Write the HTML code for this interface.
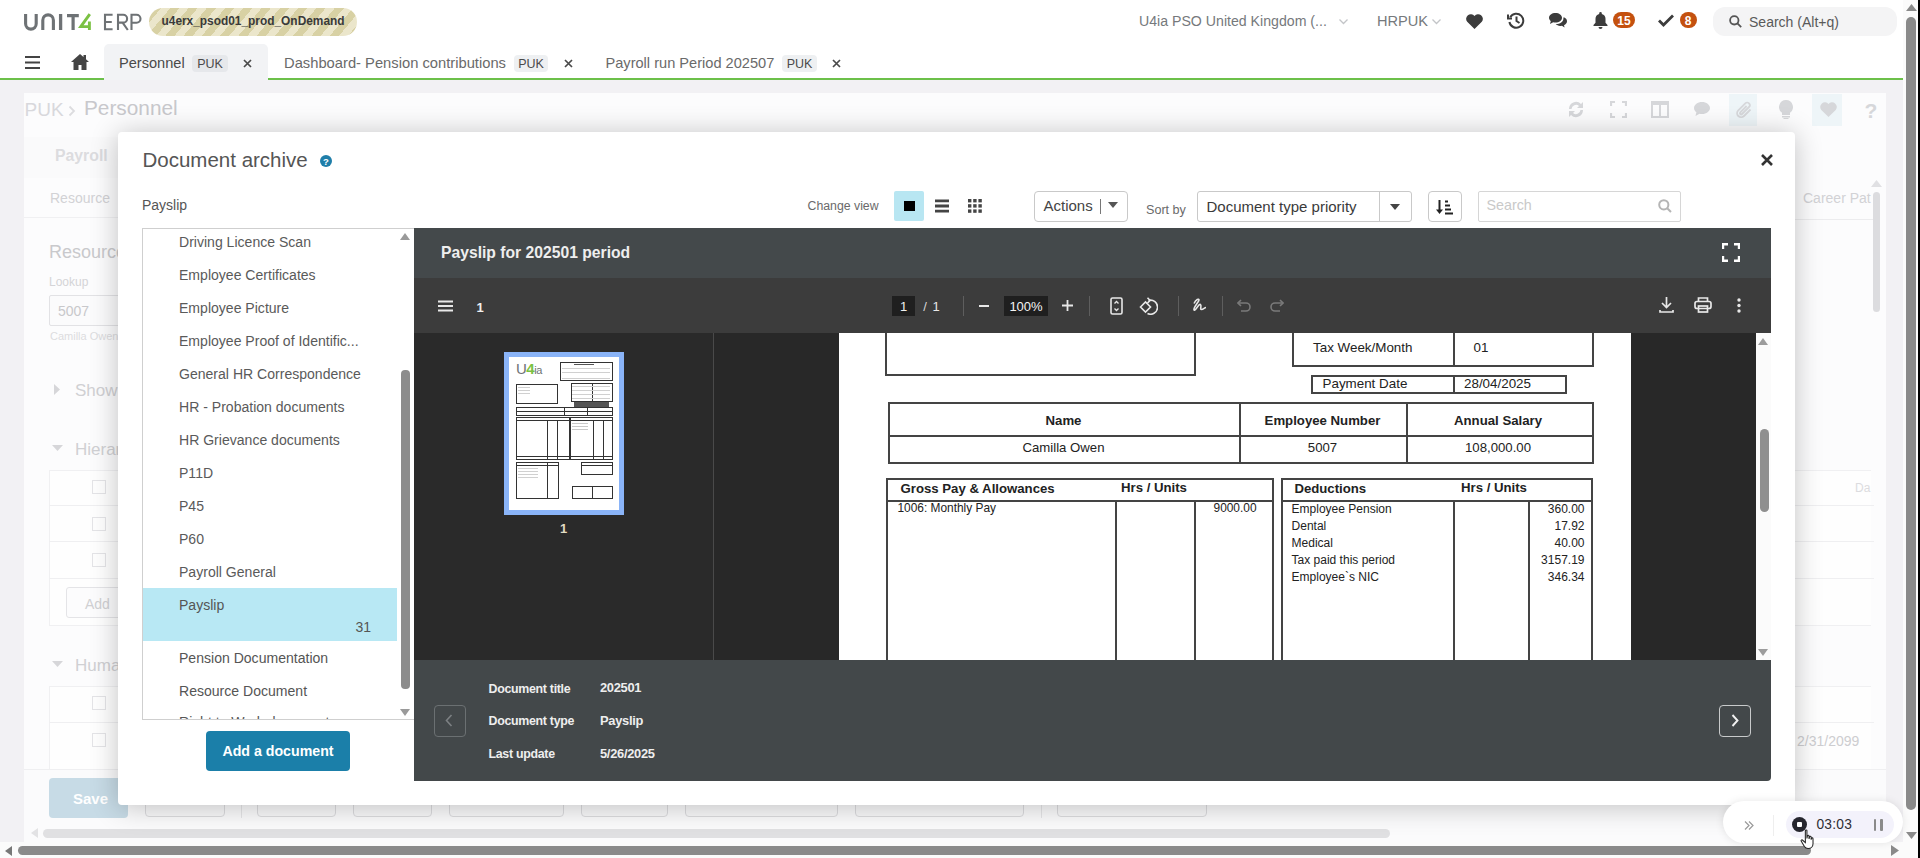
<!DOCTYPE html>
<html><head><meta charset="utf-8">
<style>
*{box-sizing:border-box;margin:0;padding:0}
html,body{width:1920px;height:858px;overflow:hidden;background:#fff;font-family:"Liberation Sans",sans-serif;color:#333;position:relative}
.a{position:absolute}
.t{position:absolute;white-space:nowrap;line-height:1}
</style></head><body>
<div class="a" style="left:0px;top:80px;width:1903px;height:764px;background:#f2f1f4"></div>
<div class="a" style="left:24px;top:93px;width:1862px;height:751px;background:#fcfcfd"></div>
<div class="t" style="left:24.5px;top:99.9px;font-size:19px;color:#d8d8dc;">PUK</div>
<svg class="a" style="left:68px;top:105px" width="8" height="12"><path d="M1.5 1.5l4.5 4.5-4.5 4.5" fill="none" stroke="#dcdcdf" stroke-width="1.8"/></svg>
<div class="t" style="left:84.0px;top:98.4px;font-size:20.8px;color:#c8c8cc;">Personnel</div>
<div class="a" style="left:1729px;top:94px;width:28px;height:32px;background:#eef5f8"></div>
<div class="a" style="left:1812px;top:94px;width:30px;height:32px;background:#eef5f8"></div>
<svg class="a" style="left:1566px;top:100px" width="20" height="19" viewBox="0 0 20 19"><path d="M3 9a7 7 0 0 1 12-5l2-2v6h-6l2-2a4.5 4.5 0 0 0-7.5 3z M17 10a7 7 0 0 1-12 5l-2 2v-6h6l-2 2a4.5 4.5 0 0 0 7.5-3z" fill="#d6d7da"/></svg>
<svg class="a" style="left:1610px;top:101px" width="17" height="17" viewBox="0 0 17 17" fill="none" stroke="#d6d7da" stroke-width="2.2"><path d="M1 5V1h4M12 1h4v4M16 12v4h-4M5 16H1v-4"/></svg>
<svg class="a" style="left:1651px;top:101px" width="18" height="17" viewBox="0 0 18 17"><path d="M0 0h18v17H0z M2 4v11h6V4z M10 4v11h6V4z" fill="#d6d7da" fill-rule="evenodd"/></svg>
<svg class="a" style="left:1694px;top:102px" width="16" height="15" viewBox="0 0 16 15"><path d="M8 0C3.6 0 0 2.7 0 6c0 1.7.9 3.2 2.4 4.3L1.5 14l4-2.3c.8.2 1.6.3 2.5.3 4.4 0 8-2.7 8-6S12.4 0 8 0z" fill="#d6d7da"/></svg>
<svg class="a" style="left:1736px;top:101px" width="17" height="18" viewBox="0 0 17 18" fill="none" stroke="#d6d7da" stroke-width="1.8"><path d="M14.5 8.5l-6.5 6.5a4 4 0 0 1-5.7-5.7l7-7a2.6 2.6 0 0 1 3.7 3.7l-7 7a1.2 1.2 0 0 1-1.7-1.7l6.3-6.3"/></svg>
<svg class="a" style="left:1779px;top:100px" width="14" height="19" viewBox="0 0 14 19"><path d="M7 0a7 7 0 0 0-4 12.7V15h8v-2.3A7 7 0 0 0 7 0z M3 16h8v1.5H3z M4.5 18h5v1h-5z" fill="#d6d7da"/></svg>
<svg class="a" style="left:1820px;top:102px" width="17" height="15" viewBox="0 0 17 15"><path d="M8.5 15L1.3 8A4.3 4.3 0 0 1 8.5 2a4.3 4.3 0 0 1 7.2 6z" fill="#d6d7da"/></svg>
<div class="t" style="left:1864.5px;top:99.7px;font-size:21px;color:#d6d7da;font-weight:bold;">?</div>
<div class="a" style="left:24px;top:137px;width:96px;height:41px;background:#fafafb"></div>
<div class="t" style="left:55.0px;top:147.6px;font-size:15.8px;color:#dcdcdf;font-weight:bold;">Payroll</div>
<div class="t" style="left:50.0px;top:191.1px;font-size:14px;color:#d2d2d5;">Resource</div>
<div class="t" style="left:1803.0px;top:191.1px;font-size:14px;color:#d2d2d5;">Career Pat</div>
<div class="a" style="left:24px;top:217px;width:96px;height:1px;background:#f0f0f2"></div>
<div class="a" style="left:1795px;top:219px;width:80px;height:1px;background:#ececee"></div>
<div class="a" style="left:1873px;top:192px;width:7px;height:120px;background:#dcdcdf;border-radius:4px"></div>
<svg class="a" style="left:1871px;top:180px" width="11" height="7"><path d="M0 7L5.5 0 11 7z" fill="#e0e0e3"/></svg>
<div class="t" style="left:49.0px;top:242.8px;font-size:18px;color:#c9c9cc;">Resource</div>
<div class="t" style="left:49.0px;top:275.8px;font-size:12px;color:#d4d4d7;">Lookup</div>
<div class="a" style="left:49px;top:295px;width:90px;height:31px;border:1px solid #e2e2e5;background:#fbfbfc;border-radius:2px"></div>
<div class="t" style="left:58.0px;top:304.1px;font-size:14px;color:#c8c8cb;">5007</div>
<div class="t" style="left:50.0px;top:330.7px;font-size:11px;color:#dcdcdf;">Camilla Owen</div>
<svg class="a" style="left:54px;top:384px" width="7" height="11"><path d="M0 0L6 5.5 0 11z" fill="#d6d6d9"/></svg>
<div class="t" style="left:75.0px;top:381.6px;font-size:17px;color:#d0d0d3;">Show</div>
<svg class="a" style="left:52px;top:445px" width="11" height="7"><path d="M0 0h11L5.5 6z" fill="#d6d6d9"/></svg>
<div class="t" style="left:75.0px;top:440.6px;font-size:17px;color:#d0d0d3;">Hierarchy</div>
<div class="a" style="left:49px;top:470px;width:1822px;height:156px;border:1px solid #f0f0f2;border-right:none;background:#fefefe"></div>
<div class="a" style="left:49px;top:505px;width:1825px;height:1px;background:#efeff1"></div>
<div class="a" style="left:49px;top:541px;width:1825px;height:1px;background:#efeff1"></div>
<div class="a" style="left:49px;top:578px;width:1825px;height:1px;background:#efeff1"></div>
<div class="a" style="left:92px;top:480px;width:14px;height:14px;border:1px solid #e4e4e7;background:#fefefe"></div>
<div class="a" style="left:92px;top:517px;width:14px;height:14px;border:1px solid #e4e4e7;background:#fefefe"></div>
<div class="a" style="left:92px;top:553px;width:14px;height:14px;border:1px solid #e4e4e7;background:#fefefe"></div>
<div class="a" style="left:66px;top:587px;width:80px;height:31px;border:1px solid #e4e4e7;border-radius:3px;background:#fcfcfd"></div>
<div class="t" style="left:85.0px;top:597.1px;font-size:14px;color:#d0d0d3;">Add</div>
<div class="t" style="left:1855.0px;top:481.8px;font-size:12px;color:#dcdcdf;">Da</div>
<svg class="a" style="left:52px;top:661px" width="11" height="7"><path d="M0 0h11L5.5 6z" fill="#d6d6d9"/></svg>
<div class="t" style="left:75.0px;top:656.6px;font-size:17px;color:#d0d0d3;">Human</div>
<div class="a" style="left:49px;top:686px;width:1822px;height:84px;border:1px solid #f0f0f2;border-right:none;border-bottom:none;background:#fefefe"></div>
<div class="a" style="left:49px;top:722px;width:1825px;height:1px;background:#efeff1"></div>
<div class="a" style="left:92px;top:696px;width:14px;height:14px;border:1px solid #e4e4e7;background:#fefefe"></div>
<div class="a" style="left:92px;top:733px;width:14px;height:14px;border:1px solid #e4e4e7;background:#fefefe"></div>
<div class="t" style="left:1797.0px;top:734.1px;font-size:14px;color:#cdcdd0;">2/31/2099</div>
<div class="a" style="left:24px;top:769px;width:1862px;height:75px;background:#fbfbfc"></div>
<div class="a" style="left:24px;top:769px;width:1862px;height:1px;background:#efeff1"></div>
<div class="a" style="left:49px;top:778px;width:79px;height:40px;background:#c7dbe6;border-radius:4px"></div>
<div class="t" style="left:73.0px;top:791.3px;font-size:15px;color:#ffffff;font-weight:bold;">Save</div>
<div class="a" style="left:145px;top:778px;width:80px;height:39px;border:1px solid #dcdcdf;border-radius:4px;background:#f9f9fa"></div>
<div class="a" style="left:257px;top:778px;width:79px;height:39px;border:1px solid #dcdcdf;border-radius:4px;background:#f9f9fa"></div>
<div class="a" style="left:353px;top:778px;width:79px;height:39px;border:1px solid #dcdcdf;border-radius:4px;background:#f9f9fa"></div>
<div class="a" style="left:449px;top:778px;width:115px;height:39px;border:1px solid #dcdcdf;border-radius:4px;background:#f9f9fa"></div>
<div class="a" style="left:581px;top:778px;width:87px;height:39px;border:1px solid #dcdcdf;border-radius:4px;background:#f9f9fa"></div>
<div class="a" style="left:685px;top:778px;width:153px;height:39px;border:1px solid #dcdcdf;border-radius:4px;background:#f9f9fa"></div>
<div class="a" style="left:855px;top:778px;width:169px;height:39px;border:1px solid #dcdcdf;border-radius:4px;background:#f9f9fa"></div>
<div class="a" style="left:1057px;top:778px;width:150px;height:39px;border:1px solid #dcdcdf;border-radius:4px;background:#f9f9fa"></div>
<div class="a" style="left:241px;top:778px;width:1px;height:40px;background:#e6e6e8"></div>
<div class="a" style="left:1041px;top:778px;width:1px;height:40px;background:#e6e6e8"></div>
<svg class="a" style="left:31px;top:828px" width="7" height="10"><path d="M7 0v10L0 5z" fill="#e2e2e4"/></svg>
<div class="a" style="left:43px;top:829px;width:1347px;height:9px;background:#e0e0e2;border-radius:5px"></div>
<div class="a" style="left:0px;top:0px;width:1903px;height:80px;background:#fff"></div>
<svg class="a" style="left:22px;top:12px" width="122" height="20" viewBox="0 0 122 20">
<path d="M3.6 2v9.8a5.3 5.3 0 0 0 10.6 0V2" fill="none" stroke="#6e7275" stroke-width="3.1"/>
<path d="M20.8 18V8.2a5.3 5.3 0 0 1 10.6 0V18" fill="none" stroke="#6e7275" stroke-width="3.1"/>
<path d="M38.6 2v16" stroke="#6e7275" stroke-width="3.3"/>
<path d="M45 3.6h11.8M51.1 3.6V18" stroke="#6e7275" stroke-width="3.2" fill="none"/>
<path d="M67.8 2.2L58.8 14.6H68.8M67.4 9.5V18" stroke="#7bc143" stroke-width="2.9" fill="none" stroke-linejoin="miter"/>
<path d="M90.6 2.8h-7.6v14.4h7.6M83 10h6.8" fill="none" stroke="#6e7275" stroke-width="2.1"/>
<path d="M96 18V2.8h5.2a3.9 3.9 0 0 1 0 7.8H96M100.6 10.6l5.2 7.4" fill="none" stroke="#6e7275" stroke-width="2.1"/>
<path d="M109.5 18V2.8h5a4 4 0 0 1 0 8h-5" fill="none" stroke="#6e7275" stroke-width="2.1"/>
</svg>
<div class="a" style="left:149px;top:8px;width:208px;height:28px;border-radius:14px;background:repeating-linear-gradient(-50deg,#d8d1a4 0 7px,#ebe6cb 7px 14px)"></div>
<div class="t" style="left:161.5px;top:15.7px;font-size:11.9px;color:#3a3a3a;font-weight:bold;">u4erx_psod01_prod_OnDemand</div>
<div class="t" style="left:1139.0px;top:14.0px;font-size:14.15px;color:#76797c;">U4ia PSO United Kingdom (...</div>
<svg class="a" style="left:1339px;top:19px" width="9" height="6"><path d="M.5.5L4.5 4.5 8.5.5" fill="none" stroke="#c3c5c8" stroke-width="1.3"/></svg>
<div class="t" style="left:1377.0px;top:13.6px;font-size:14.6px;color:#76797c;">HRPUK</div>
<svg class="a" style="left:1432px;top:19px" width="9" height="6"><path d="M.5.5L4.5 4.5 8.5.5" fill="none" stroke="#c3c5c8" stroke-width="1.3"/></svg>
<svg class="a" style="left:1466px;top:13.5px" width="17" height="15" viewBox="0 0 17 15"><path d="M8.5 15L1.2 7.8A4.4 4.4 0 0 1 8.5 1.9a4.4 4.4 0 0 1 7.3 5.9z" fill="#3c3c3c"/></svg>
<svg class="a" style="left:1507px;top:12px" width="18" height="17" viewBox="0 0 18 17" fill="none" stroke="#3c3c3c" stroke-width="2"><path d="M3.2 5.2A7 7 0 1 1 2.4 10"/><path d="M1 2.5v4h4" /><path d="M9.5 4.5v4.5l3 2"/></svg>
<svg class="a" style="left:1549px;top:13px" width="18" height="15" viewBox="0 0 18 15"><path d="M6.5 0C2.9 0 0 2.1 0 4.8c0 1.3.7 2.5 1.8 3.3L1 11l3.2-1.7c.7.2 1.5.3 2.3.3 3.6 0 6.5-2.1 6.5-4.8S10.1 0 6.5 0z" fill="#3c3c3c"/><path d="M14.3 4.6c.1.3.1.5.1.8 0 3.3-3.4 5.7-7.5 5.7h-.2c1 1.1 2.6 1.8 4.4 1.8.6 0 1.2-.1 1.8-.2L15.6 14.6l-.6-2.4c1.8-.8 3-2.2 3-3.9 0-1.5-1-2.9-2.6-3.7z" fill="#3c3c3c"/></svg>
<svg class="a" style="left:1593px;top:12px" width="15" height="17" viewBox="0 0 15 17"><path d="M7.5 0a1.3 1.3 0 0 0-1.3 1.3v.6A5 5 0 0 0 2.5 6.8v4L.5 13v1h14v-1l-2-2.2v-4a5 5 0 0 0-3.7-4.9v-.6A1.3 1.3 0 0 0 7.5 0z M5.5 15h4a2 2 0 0 1-4 0z" fill="#3c3c3c"/></svg>
<div class="a" style="left:1613px;top:12px;width:22px;height:16px;background:#c4510f;border-radius:8px"></div>
<div class="t" style="left:1624.0px;top:15.0px;font-size:12px;color:#fff;font-weight:bold;transform:translateX(-50%);">15</div>
<svg class="a" style="left:1658px;top:14px" width="16" height="13" viewBox="0 0 16 13"><path d="M1 6.5l4.5 4.5L15 1.5" fill="none" stroke="#3c3c3c" stroke-width="2.8"/></svg>
<div class="a" style="left:1680px;top:12px;width:16.5px;height:16px;background:#c4510f;border-radius:8px"></div>
<div class="t" style="left:1688.2px;top:15.0px;font-size:12px;color:#fff;font-weight:bold;transform:translateX(-50%);">8</div>
<div class="a" style="left:1713px;top:7px;width:184px;height:29px;background:#f4f4f5;border-radius:12px"></div>
<svg class="a" style="left:1729px;top:15px" width="13" height="13" viewBox="0 0 13 13" fill="none" stroke="#555" stroke-width="1.8"><circle cx="5.3" cy="5.3" r="4.2"/><path d="M8.4 8.4L12.2 12.2"/></svg>
<div class="t" style="left:1749.0px;top:15.1px;font-size:14.02px;color:#5a5a5a;">Search (Alt+q)</div>
<svg class="a" style="left:25px;top:56px" width="15" height="13" viewBox="0 0 15 13"><path d="M0 1h15M0 6.5h15M0 12h15" stroke="#444" stroke-width="2.2"/></svg>
<svg class="a" style="left:71px;top:54px" width="18" height="16" viewBox="0 0 18 16"><path d="M9 0L0 8h2.5v8h5v-5h3v5h5V8H18L15 5.3V1h-2.5v2.1z" fill="#444"/></svg>
<div class="a" style="left:104px;top:44px;width:164px;height:36px;background:#f2f3f5;border-radius:5px 5px 0 0"></div>
<div class="a" style="left:0px;top:77.5px;width:104px;height:2.5px;background:#6cc04a"></div>
<div class="a" style="left:268px;top:77.5px;width:1635px;height:2.5px;background:#6cc04a"></div>
<div class="t" style="left:119.0px;top:56.1px;font-size:14.6px;color:#4a4a4a;">Personnel</div>
<div class="a" style="left:192px;top:55px;width:36px;height:17px;background:#e6e8eb;border-radius:4px"></div>
<div class="t" style="left:210.0px;top:57.9px;font-size:12.5px;color:#4a4a4a;transform:translateX(-50%);">PUK</div>
<svg class="a" style="left:243px;top:59px" width="9" height="9"><path d="M1 1l7 7M8 1L1 8" stroke="#4a4a4a" stroke-width="1.7"/></svg>
<div class="t" style="left:284.0px;top:56.0px;font-size:14.74px;color:#6a6a6a;">Dashboard- Pension contributions</div>
<div class="a" style="left:514px;top:55px;width:34px;height:17px;background:#eef0f2;border-radius:4px"></div>
<div class="t" style="left:531.0px;top:57.9px;font-size:12.5px;color:#4a4a4a;transform:translateX(-50%);">PUK</div>
<svg class="a" style="left:564px;top:59px" width="9" height="9"><path d="M1 1l7 7M8 1L1 8" stroke="#4a4a4a" stroke-width="1.7"/></svg>
<div class="t" style="left:605.5px;top:56.1px;font-size:14.6px;color:#6a6a6a;">Payroll run Period 202507</div>
<div class="a" style="left:782px;top:55px;width:35px;height:17px;background:#eef0f2;border-radius:4px"></div>
<div class="t" style="left:799.5px;top:57.9px;font-size:12.5px;color:#4a4a4a;transform:translateX(-50%);">PUK</div>
<svg class="a" style="left:832px;top:59px" width="9" height="9"><path d="M1 1l7 7M8 1L1 8" stroke="#4a4a4a" stroke-width="1.7"/></svg>
<div class="a" style="left:1903px;top:0px;width:17px;height:858px;background:#fbfbfb"></div>
<div class="a" style="left:1918px;top:0px;width:2px;height:858px;background:#000"></div>
<svg class="a" style="left:1906px;top:4px" width="11" height="7"><path d="M0 7L5.5 0 11 7z" fill="#8a8a8a"/></svg>
<div class="a" style="left:1906px;top:17px;width:10px;height:793px;background:#8a8a8a;border-radius:5px"></div>
<svg class="a" style="left:1906px;top:832px" width="11" height="7"><path d="M0 0h11L5.5 7z" fill="#8a8a8a"/></svg>
<div class="a" style="left:0px;top:842px;width:1903px;height:16px;background:#fbfbfb"></div>
<svg class="a" style="left:5px;top:846px" width="7" height="10"><path d="M7 0v10L0 5z" fill="#777"/></svg>
<div class="a" style="left:18px;top:846px;width:1793px;height:9px;background:#8a8a8a;border-radius:5px"></div>
<svg class="a" style="left:1891px;top:845px" width="8" height="11"><path d="M0 0v11l8-5.5z" fill="#8a8a8a"/></svg>
<div class="a" style="left:118px;top:132px;width:1677px;height:673px;background:#fff;border-radius:4px;box-shadow:0 2px 28px rgba(0,0,0,0.24)"></div>
<div class="t" style="left:142.5px;top:149.6px;font-size:20.5px;color:#555;">Document archive</div>
<div class="a" style="left:320px;top:154.5px;width:12px;height:12px;border-radius:50%;background:#1f7ea9"></div>
<div class="t" style="left:326.0px;top:157.0px;font-size:9.5px;color:#fff;font-weight:bold;transform:translateX(-50%);">?</div>
<svg class="a" style="left:1761px;top:154px" width="12" height="12"><path d="M1 1l10 10M11 1L1 11" stroke="#333" stroke-width="2.6"/></svg>
<div class="t" style="left:142.0px;top:198.1px;font-size:14px;color:#555;">Payslip</div>
<div class="t" style="left:807.5px;top:200.1px;font-size:12.3px;color:#6a6a6a;">Change view</div>
<div class="a" style="left:894px;top:190.5px;width:30px;height:30px;background:#b8e6f2;border-radius:2px"></div>
<div class="a" style="left:904px;top:200.5px;width:10.5px;height:10.5px;background:#000"></div>
<svg class="a" style="left:935px;top:199px" width="14" height="14"><path d="M0 1.8h14M0 7h14M0 12.2h14" stroke="#444" stroke-width="2.8"/></svg>
<svg class="a" style="left:967.5px;top:199px" width="15" height="15"><rect x="0.0" y="0.0" width="3.4" height="3.4" fill="#444"/><rect x="5.2" y="0.0" width="3.4" height="3.4" fill="#444"/><rect x="10.4" y="0.0" width="3.4" height="3.4" fill="#444"/><rect x="0.0" y="5.2" width="3.4" height="3.4" fill="#444"/><rect x="5.2" y="5.2" width="3.4" height="3.4" fill="#444"/><rect x="10.4" y="5.2" width="3.4" height="3.4" fill="#444"/><rect x="0.0" y="10.4" width="3.4" height="3.4" fill="#444"/><rect x="5.2" y="10.4" width="3.4" height="3.4" fill="#444"/><rect x="10.4" y="10.4" width="3.4" height="3.4" fill="#444"/></svg>
<div class="a" style="left:1034px;top:190.5px;width:94px;height:31px;border:1px solid #c9c9c9;border-radius:4px;background:#fff"></div>
<div class="t" style="left:1043.5px;top:198.3px;font-size:15px;color:#444;">Actions</div>
<div class="a" style="left:1100px;top:199px;width:1px;height:15px;background:#777"></div>
<svg class="a" style="left:1108px;top:201.5px" width="10" height="6"><path d="M0 0h10L5 6z" fill="#555"/></svg>
<div class="t" style="left:1146.0px;top:204.3px;font-size:12.6px;color:#6a6a6a;">Sort by</div>
<div class="a" style="left:1197px;top:190.5px;width:215px;height:31px;border:1px solid #c9c9c9;border-radius:3px;background:#fff"></div>
<div class="a" style="left:1379px;top:191px;width:1px;height:30px;background:#c9c9c9"></div>
<svg class="a" style="left:1389.5px;top:203.5px" width="10" height="6"><path d="M0 0h10L5 6z" fill="#444"/></svg>
<div class="t" style="left:1206.5px;top:199.3px;font-size:15px;color:#3a3a3a;">Document type priority</div>
<div class="a" style="left:1427.5px;top:190.5px;width:34px;height:31px;border:1px solid #c9c9c9;border-radius:4px;background:#fff"></div>
<svg class="a" style="left:1436px;top:199.5px" width="17" height="15" viewBox="0 0 17 15"><path d="M3.5 0v11" stroke="#222" stroke-width="2"/><path d="M0 9.5h7L3.5 14z" fill="#222"/><path d="M9 1.5h3M9 5.5h5M9 9.5h6M9 13.5h8" stroke="#222" stroke-width="2"/></svg>
<div class="a" style="left:1477.5px;top:190.5px;width:203px;height:31px;border:1px solid #d6d6d6;border-radius:2px;background:#fff"></div>
<div class="t" style="left:1486.5px;top:198.4px;font-size:14.3px;color:#c9c9c9;">Search</div>
<svg class="a" style="left:1658px;top:199px" width="14" height="14" viewBox="0 0 14 14" fill="none" stroke="#b5b5b5" stroke-width="2"><circle cx="5.8" cy="5.8" r="4.6"/><path d="M9.2 9.2L13 13"/></svg>
<div class="a" style="left:142px;top:228px;width:272px;height:492px;border:1px solid #cfcfcf;border-right:none;background:#fff"></div>
<div class="t" style="left:179.0px;top:235.1px;font-size:14.05px;color:#5a5a5a;">Driving Licence Scan</div>
<div class="t" style="left:179.0px;top:268.1px;font-size:14.05px;color:#5a5a5a;">Employee Certificates</div>
<div class="t" style="left:179.0px;top:301.1px;font-size:14.05px;color:#5a5a5a;">Employee Picture</div>
<div class="t" style="left:179.0px;top:334.1px;font-size:14.05px;color:#5a5a5a;">Employee Proof of Identific...</div>
<div class="t" style="left:179.0px;top:367.1px;font-size:14.05px;color:#5a5a5a;">General HR Correspondence</div>
<div class="t" style="left:179.0px;top:400.1px;font-size:14.05px;color:#5a5a5a;">HR - Probation documents</div>
<div class="t" style="left:179.0px;top:433.1px;font-size:14.05px;color:#5a5a5a;">HR Grievance documents</div>
<div class="t" style="left:179.0px;top:466.1px;font-size:14.05px;color:#5a5a5a;">P11D</div>
<div class="t" style="left:179.0px;top:499.1px;font-size:14.05px;color:#5a5a5a;">P45</div>
<div class="t" style="left:179.0px;top:532.1px;font-size:14.05px;color:#5a5a5a;">P60</div>
<div class="t" style="left:179.0px;top:565.1px;font-size:14.05px;color:#5a5a5a;">Payroll General</div>
<div class="a" style="left:143px;top:588px;width:254px;height:53px;background:#b8e8f4"></div>
<div class="t" style="left:179.0px;top:598.1px;font-size:14.05px;color:#555;">Payslip</div>
<div class="t" style="right:1549.0px;top:620.1px;font-size:14.05px;color:#555;">31</div>
<div class="t" style="left:179.0px;top:651.1px;font-size:14.05px;color:#555;">Pension Documentation</div>
<div class="t" style="left:179.0px;top:684.1px;font-size:14.05px;color:#555;">Resource Document</div>
<div class="a" style="left:143px;top:710px;width:254px;height:9px;overflow:hidden"><div class="t" style="left:36px;top:5px;font-size:14.05px;color:#555">Right to Work document</div></div>
<svg class="a" style="left:400px;top:233px" width="10" height="7"><path d="M0 7L5 0 10 7z" fill="#9a9a9a"/></svg>
<div class="a" style="left:401px;top:370px;width:8.5px;height:319px;background:#8c8c8c;border-radius:4px"></div>
<svg class="a" style="left:400px;top:709px" width="10" height="7"><path d="M0 0h10L5 7z" fill="#9a9a9a"/></svg>
<div class="a" style="left:206px;top:731px;width:144px;height:40px;background:#1b7fa9;border-radius:4px"></div>
<div class="t" style="left:278.0px;top:743.5px;font-size:14.2px;color:#fff;font-weight:bold;transform:translateX(-50%);">Add a document</div>
<div class="a" style="left:414px;top:228px;width:1357px;height:50px;background:#44494b"></div>
<div class="t" style="left:441.0px;top:245.4px;font-size:15.7px;color:#eeeeee;font-weight:bold;">Payslip for 202501 period</div>
<svg class="a" style="left:1722px;top:243px" width="18" height="19" viewBox="0 0 18 19" fill="none" stroke="#fff" stroke-width="2.4"><path d="M1 6V1.2h5M12 1.2h5V6M17 13v4.8h-5M6 17.8H1V13"/></svg>
<div class="a" style="left:414px;top:278px;width:1357px;height:55px;background:#3c3c3c"></div>
<svg class="a" style="left:438px;top:300px" width="15" height="12"><path d="M0 1.5h15M0 6h15M0 10.5h15" stroke="#e8e8e8" stroke-width="1.8"/></svg>
<div class="t" style="left:480.0px;top:300.5px;font-size:13px;color:#f0f0f0;font-weight:bold;transform:translateX(-50%);">1</div>
<div class="a" style="left:892px;top:296px;width:23px;height:20px;background:#1f1f1f"></div>
<div class="t" style="left:903.5px;top:300.0px;font-size:13px;color:#f0f0f0;transform:translateX(-50%);">1</div>
<div class="t" style="left:925.0px;top:300.0px;font-size:13px;color:#d8d8d8;transform:translateX(-50%);">/</div>
<div class="t" style="left:936.0px;top:300.0px;font-size:13px;color:#e8e8e8;transform:translateX(-50%);">1</div>
<div class="a" style="left:963px;top:296px;width:1px;height:20px;background:#5e5e5e"></div>
<div class="a" style="left:978.5px;top:305px;width:10.5px;height:1.8px;background:#e8e8e8"></div>
<div class="a" style="left:1004px;top:296px;width:44px;height:20px;background:#1f1f1f"></div>
<div class="t" style="left:1026.0px;top:300.0px;font-size:13px;color:#f4f4f4;transform:translateX(-50%);">100%</div>
<svg class="a" style="left:1062px;top:300px" width="11" height="11"><path d="M5.5 0v11M0 5.5h11" stroke="#e8e8e8" stroke-width="1.8"/></svg>
<div class="a" style="left:1088.5px;top:296px;width:1px;height:20px;background:#5e5e5e"></div>
<svg class="a" style="left:1110px;top:297px" width="13" height="18" viewBox="0 0 13 18" fill="none" stroke="#e8e8e8" stroke-width="1.6"><rect x="1" y="1" width="11" height="16" rx="1.5"/><path d="M4.5 6.5l2-2 2 2M4.5 11.5l2 2 2-2" stroke-width="1.3"/></svg>
<svg class="a" style="left:1139px;top:297px" width="19" height="18" viewBox="0 0 19 18" fill="none" stroke="#e8e8e8" stroke-width="1.6"><path d="M1.5 10l5-5 5 5-5 5z"/><path d="M9.5 3.5a7 7 0 1 1-1 13" /><path d="M8.5 0.8l2.6 2.6-2.6 2.6" /></svg>
<div class="a" style="left:1177.5px;top:296px;width:1px;height:20px;background:#5e5e5e"></div>
<div class="a" style="left:1222px;top:296px;width:1px;height:20px;background:#5e5e5e"></div>
<svg class="a" style="left:1192px;top:298px" width="15" height="15" viewBox="0 0 15 15" fill="none" stroke="#e8e8e8" stroke-width="1.6"><path d="M2 5.5c2-4.5 5-5 5-3.5S1 10 2 12s5-7 6.5-5.5-1 5 1 5 3-2 4.5-2"/></svg>
<svg class="a" style="left:1237px;top:298px" width="15" height="14" viewBox="0 0 15 14" fill="none" stroke="#7a7a7a" stroke-width="1.6"><path d="M4 2L1 5l3 3"/><path d="M1 5h8a4 4 0 0 1 0 8H4"/></svg>
<svg class="a" style="left:1269px;top:298px" width="15" height="14" viewBox="0 0 15 14" fill="none" stroke="#7a7a7a" stroke-width="1.6"><path d="M11 2l3 3-3 3"/><path d="M14 5H6a4 4 0 0 0 0 8h5"/></svg>
<svg class="a" style="left:1659px;top:297px" width="15" height="16" viewBox="0 0 15 16" fill="none" stroke="#e8e8e8" stroke-width="1.7"><path d="M7.5 0v10M3 6l4.5 4.5L12 6"/><path d="M1 13v2h13v-2"/></svg>
<svg class="a" style="left:1694px;top:297px" width="18" height="16" viewBox="0 0 18 16" fill="none" stroke="#e8e8e8" stroke-width="1.7"><path d="M4.5 4.5V1h9v3.5"/><rect x="1" y="4.5" width="16" height="7" rx="2"/><rect x="4.5" y="9" width="9" height="6"/></svg>
<svg class="a" style="left:1737px;top:298px" width="4" height="15"><circle cx="2" cy="2" r="1.7" fill="#e8e8e8"/><circle cx="2" cy="7.5" r="1.7" fill="#e8e8e8"/><circle cx="2" cy="13" r="1.7" fill="#e8e8e8"/></svg>
<div class="a" style="left:414px;top:333px;width:300px;height:327px;background:#2a2a2a"></div>
<div class="a" style="left:713px;top:333px;width:1px;height:327px;background:#4a4a4a"></div>
<div class="a" style="left:714px;top:333px;width:1042px;height:327px;background:#282828"></div>
<div class="a" style="left:1756px;top:333px;width:15px;height:327px;background:#fbfbfb"></div>
<svg class="a" style="left:1758px;top:338px" width="10" height="7"><path d="M0 7L5 0 10 7z" fill="#9c9c9c"/></svg>
<div class="a" style="left:1759.5px;top:428.5px;width:9px;height:83px;background:#8f8f8f;border-radius:4.5px"></div>
<svg class="a" style="left:1758px;top:649px" width="10" height="7"><path d="M0 0h10L5 7z" fill="#9c9c9c"/></svg>
<div class="a" style="left:504px;top:352px;width:120px;height:163px;background:#8ab4f8"></div>
<div class="a" style="left:509px;top:357px;width:110px;height:153px;background:#fff"></div>
<div class="t" style="left:516px;top:360.5px;font-size:15px;color:#6e7275;letter-spacing:-0.5px">U<span style="color:#7bc143;font-weight:bold">4</span><span style="font-size:11px">ia</span></div>
<div class="a" style="left:559.5px;top:361.5px;width:53.5px;height:19.5px;border:1px solid #333"></div>
<div class="a" style="left:574px;top:364px;width:20px;height:1px;background:#555"></div>
<div class="a" style="left:562px;top:368px;width:48px;height:1px;background:#d0d0d0"></div>
<div class="a" style="left:562px;top:372px;width:48px;height:1px;background:#d0d0d0"></div>
<div class="a" style="left:562px;top:378px;width:48px;height:1px;background:#d0d0d0"></div>
<div class="a" style="left:515.5px;top:384px;width:42.5px;height:19.5px;border:1px solid #333"></div>
<div class="a" style="left:518px;top:387px;width:12px;height:1px;background:#d0d0d0"></div>
<div class="a" style="left:518px;top:390px;width:12px;height:1px;background:#d0d0d0"></div>
<div class="a" style="left:518px;top:393px;width:12px;height:1px;background:#d0d0d0"></div>
<div class="a" style="left:570.5px;top:383px;width:42.5px;height:19px;border:1px solid #333"></div>
<div class="a" style="left:591.5px;top:383px;width:1px;height:19px;background:#333"></div>
<div class="a" style="left:572px;top:386px;width:38px;height:1px;background:#d0d0d0"></div>
<div class="a" style="left:572px;top:390px;width:38px;height:1px;background:#d0d0d0"></div>
<div class="a" style="left:572px;top:394px;width:38px;height:1px;background:#d0d0d0"></div>
<div class="a" style="left:572px;top:398px;width:38px;height:1px;background:#d0d0d0"></div>
<div class="a" style="left:573.5px;top:402px;width:35px;height:4.5px;background:#555"></div>
<div class="a" style="left:515.5px;top:407px;width:97.5px;height:8.5px;border:1px solid #333"></div>
<div class="a" style="left:515.5px;top:411px;width:97.5px;height:1px;background:#333"></div>
<div class="a" style="left:563.5px;top:407px;width:1px;height:8.5px;background:#333"></div>
<div class="a" style="left:587px;top:407px;width:1px;height:8.5px;background:#333"></div>
<div class="a" style="left:515.5px;top:417px;width:54.0px;height:42.5px;border:1px solid #333"></div>
<div class="a" style="left:515.5px;top:420px;width:54px;height:1px;background:#333"></div>
<div class="a" style="left:546.5px;top:420px;width:1px;height:39px;background:#333"></div>
<div class="a" style="left:557px;top:420px;width:1px;height:39px;background:#333"></div>
<div class="a" style="left:515.5px;top:455.5px;width:54px;height:1px;background:#333"></div>
<div class="a" style="left:569.5px;top:417px;width:43.0px;height:42.5px;border:1px solid #333"></div>
<div class="a" style="left:569.5px;top:420px;width:43px;height:1px;background:#333"></div>
<div class="a" style="left:593px;top:420px;width:1px;height:39px;background:#333"></div>
<div class="a" style="left:603px;top:420px;width:1px;height:39px;background:#333"></div>
<div class="a" style="left:569.5px;top:455.5px;width:43px;height:1px;background:#333"></div>
<div class="a" style="left:572px;top:423px;width:16px;height:1px;background:#c8c8c8"></div>
<div class="a" style="left:572px;top:426px;width:16px;height:1px;background:#c8c8c8"></div>
<div class="a" style="left:572px;top:429px;width:16px;height:1px;background:#c8c8c8"></div>
<div class="a" style="left:515.5px;top:461.5px;width:43.5px;height:37.0px;border:1px solid #333"></div>
<div class="a" style="left:546.5px;top:461.5px;width:1px;height:37px;background:#333"></div>
<div class="a" style="left:515.5px;top:465px;width:43.5px;height:1px;background:#333"></div>
<div class="a" style="left:518px;top:468px;width:20px;height:1px;background:#d0d0d0"></div>
<div class="a" style="left:518px;top:471px;width:20px;height:1px;background:#d0d0d0"></div>
<div class="a" style="left:518px;top:474px;width:20px;height:1px;background:#d0d0d0"></div>
<div class="a" style="left:518px;top:477px;width:20px;height:1px;background:#d0d0d0"></div>
<div class="a" style="left:581px;top:461.5px;width:31.5px;height:13.5px;border:1px solid #333"></div>
<div class="a" style="left:581px;top:465px;width:31.5px;height:1px;background:#333"></div>
<div class="a" style="left:572px;top:486px;width:40.5px;height:12.5px;border:1px solid #333"></div>
<div class="a" style="left:591.5px;top:486px;width:1px;height:12.5px;background:#333"></div>
<div class="t" style="left:563.5px;top:522.0px;font-size:13px;color:#e2dcc4;font-weight:bold;transform:translateX(-50%);">1</div>
<div class="a" style="left:839px;top:333px;width:792px;height:327px;background:#fff;overflow:hidden">
<div class="a" style="left:46px;top:-33px;width:311px;height:76px;border:2px solid #444"></div>
<div class="a" style="left:453px;top:-33px;width:302px;height:67px;border:2px solid #444"></div>
<div class="a" style="left:613.5px;top:-33px;width:2px;height:67px;background:#444"></div>
<div class="t" style="left:474px;top:8.2px;font-size:13.4px;color:#222;">Tax Week/Month</div>
<div class="t" style="left:634.5px;top:8.2px;font-size:13.4px;color:#222;">01</div>
<div class="a" style="left:472px;top:41.5px;width:256px;height:19.0px;border:2px solid #444"></div>
<div class="a" style="left:613.5px;top:41.5px;width:2px;height:19px;background:#444"></div>
<div class="t" style="left:483.5px;top:44.0px;font-size:13.4px;color:#222;">Payment Date</div>
<div class="t" style="left:625px;top:44.0px;font-size:13.4px;color:#222;">28/04/2025</div>
<div class="a" style="left:49px;top:69px;width:706px;height:61.5px;border:2px solid #444"></div>
<div class="a" style="left:49px;top:102px;width:706px;height:2px;background:#444"></div>
<div class="a" style="left:399.5px;top:69px;width:2px;height:61px;background:#444"></div>
<div class="a" style="left:567px;top:69px;width:2px;height:61px;background:#444"></div>
<div class="t" style="left:224.5px;top:81.2px;font-size:13.2px;color:#222;font-weight:bold;transform:translateX(-50%);">Name</div>
<div class="t" style="left:483.5px;top:81.2px;font-size:13.2px;color:#222;font-weight:bold;transform:translateX(-50%);">Employee Number</div>
<div class="t" style="left:659px;top:81.2px;font-size:13.2px;color:#222;font-weight:bold;transform:translateX(-50%);">Annual Salary</div>
<div class="t" style="left:224.5px;top:108.3px;font-size:13.2px;color:#222;transform:translateX(-50%);">Camilla Owen</div>
<div class="t" style="left:483.5px;top:108.3px;font-size:13.2px;color:#222;transform:translateX(-50%);">5007</div>
<div class="t" style="left:659px;top:108.3px;font-size:13.2px;color:#222;transform:translateX(-50%);">108,000.00</div>
<div class="a" style="left:47px;top:144.5px;width:388px;height:222.5px;border:2px solid #444"></div>
<div class="a" style="left:47px;top:166.5px;width:388px;height:2px;background:#444"></div>
<div class="a" style="left:276px;top:167px;width:2px;height:200px;background:#444"></div>
<div class="a" style="left:354.5px;top:167px;width:2px;height:200px;background:#444"></div>
<div class="t" style="left:61.5px;top:149.2px;font-size:13.2px;color:#222;font-weight:bold;">Gross Pay &amp; Allowances</div>
<div class="t" style="left:282px;top:148.1px;font-size:13.2px;color:#222;font-weight:bold;">Hrs / Units</div>
<div class="t" style="left:58.5px;top:170.1px;font-size:11.9px;color:#222;">1006: Monthly Pay</div>
<div class="t" style="left:417.5px;top:170.1px;font-size:11.9px;color:#222;transform:translateX(-100%);">9000.00</div>
<div class="a" style="left:441.5px;top:144.5px;width:312.5px;height:222.5px;border:2px solid #444"></div>
<div class="a" style="left:441.5px;top:166.5px;width:312px;height:2px;background:#444"></div>
<div class="a" style="left:614px;top:167px;width:2px;height:200px;background:#444"></div>
<div class="a" style="left:688.5px;top:167px;width:2px;height:200px;background:#444"></div>
<div class="t" style="left:455.4000000000001px;top:148.8px;font-size:13.2px;color:#222;font-weight:bold;">Deductions</div>
<div class="t" style="left:622px;top:147.9px;font-size:13.2px;color:#222;font-weight:bold;">Hrs / Units</div>
<div class="t" style="left:452.5999999999999px;top:169.8px;font-size:12px;color:#222;">Employee Pension</div>
<div class="t" style="left:745.5px;top:169.8px;font-size:12px;color:#222;transform:translateX(-100%);">360.00</div>
<div class="t" style="left:452.5999999999999px;top:187.0px;font-size:12px;color:#222;">Dental</div>
<div class="t" style="left:745.5px;top:187.0px;font-size:12px;color:#222;transform:translateX(-100%);">17.92</div>
<div class="t" style="left:452.5999999999999px;top:203.8px;font-size:12px;color:#222;">Medical</div>
<div class="t" style="left:745.5px;top:203.8px;font-size:12px;color:#222;transform:translateX(-100%);">40.00</div>
<div class="t" style="left:452.5999999999999px;top:220.7px;font-size:12px;color:#222;">Tax paid this period</div>
<div class="t" style="left:745.5px;top:220.7px;font-size:12px;color:#222;transform:translateX(-100%);">3157.19</div>
<div class="t" style="left:452.5999999999999px;top:237.5px;font-size:12px;color:#222;">Employee`s NIC</div>
<div class="t" style="left:745.5px;top:237.5px;font-size:12px;color:#222;transform:translateX(-100%);">346.34</div>
</div>
<div class="a" style="left:414px;top:660px;width:1357px;height:121px;background:#43484a;border-radius:0 0 4px 0"></div>
<div class="a" style="left:433.5px;top:705px;width:32px;height:31.5px;border:1px solid #6b7072;border-radius:4px"></div>
<svg class="a" style="left:445px;top:714px" width="8" height="13"><path d="M6.5 1L1.5 6.5l5 5.5" fill="none" stroke="#7c8083" stroke-width="1.6"/></svg>
<div class="t" style="left:488.5px;top:682.7px;font-size:12.4px;color:#eeeeee;font-weight:600;letter-spacing:-0.3px;">Document title</div>
<div class="t" style="left:600.0px;top:682.3px;font-size:12.9px;color:#eeeeee;font-weight:600;letter-spacing:-0.3px;">202501</div>
<div class="t" style="left:488.5px;top:715.4px;font-size:12.4px;color:#eeeeee;font-weight:600;letter-spacing:-0.3px;">Document type</div>
<div class="t" style="left:600.0px;top:715.0px;font-size:12.9px;color:#eeeeee;font-weight:600;letter-spacing:-0.3px;">Payslip</div>
<div class="t" style="left:488.5px;top:748.0px;font-size:12.4px;color:#eeeeee;font-weight:600;letter-spacing:-0.3px;">Last update</div>
<div class="t" style="left:600.0px;top:747.6px;font-size:12.9px;color:#eeeeee;font-weight:600;letter-spacing:-0.3px;">5/26/2025</div>
<div class="a" style="left:1719px;top:705px;width:32px;height:32px;border:1px solid #c8cacb;border-radius:4px"></div>
<svg class="a" style="left:1731px;top:714px" width="8" height="13"><path d="M1.5 1l5 5.5-5 5.5" fill="none" stroke="#f2f2f2" stroke-width="1.9"/></svg>
<div class="a" style="left:1723px;top:801px;width:180px;height:42px;background:#fff;border-radius:21px;box-shadow:0 0 8px rgba(0,0,0,0.10)"></div>
<svg class="a" style="left:1744px;top:821px" width="10" height="9" viewBox="0 0 10 9" fill="none" stroke="#999" stroke-width="1.2"><path d="M1 .5l4 4-4 4M5 .5l4 4-4 4"/></svg>
<div class="a" style="left:1773px;top:815px;width:1px;height:21px;background:#eeeeee"></div>
<div class="a" style="left:1786px;top:811px;width:108px;height:27px;background:#f3f2fb;border-radius:14px"></div>
<div class="a" style="left:1791.5px;top:816.5px;width:15.5px;height:15.5px;border-radius:50%;background:#26262e"></div>
<div class="a" style="left:1796.5px;top:821.5px;width:5.5px;height:5.5px;background:#fff;border-radius:1px"></div>
<div class="t" style="left:1816.5px;top:818.1px;font-size:13.8px;color:#2e2e33;letter-spacing:0.2px;">03:03</div>
<div class="a" style="left:1873.5px;top:818.5px;width:2.7px;height:12.5px;background:#8a8a8a;border-radius:1px"></div>
<div class="a" style="left:1880px;top:818.5px;width:2.7px;height:12.5px;background:#8a8a8a;border-radius:1px"></div>
<svg class="a" style="left:1800px;top:829px" width="17" height="21" viewBox="0 0 16 20"><path d="M5 1.5c0-.8 1.5-.8 1.5 0V9l.5-2.5c.3-.8 1.5-.7 1.5.2V9.5l.5-2c.3-.8 1.5-.7 1.5.2v2.5l.4-1.3c.3-.7 1.4-.6 1.4.3V14c0 2.5-2 4.5-4.5 4.5H7.5c-1.5 0-2.6-.7-3.4-1.9L1 11.5c-.4-.7.5-1.5 1.2-1L5 13z" fill="#fff" stroke="#222" stroke-width="1"/></svg>
</body></html>
